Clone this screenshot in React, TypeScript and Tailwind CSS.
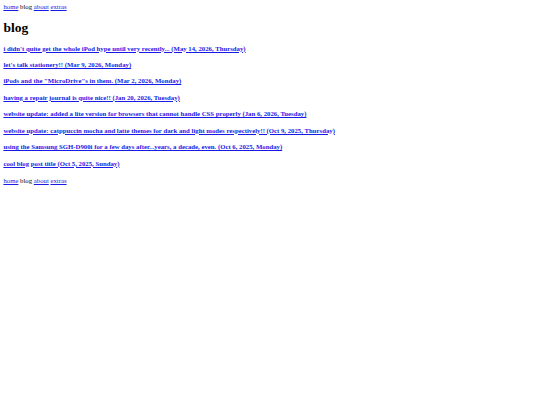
import React from 'react';

const posts = [
  "i didn't quite get the whole iPod hype until very recently... (May 14, 2026, Thursday)",
  "let's talk stationery!! (Mar 9, 2026, Monday)",
  'iPods and the "MicroDrive"s in them. (Mar 2, 2026, Monday)',
  'having a repair journal is quite nice!! (Jan 20, 2026, Tuesday)',
  'website update: added a lite version for browsers that cannot handle CSS properly (Jan 6, 2026, Tuesday)',
  'website update: catppuccin mocha and latte themes for dark and light modes respectively!! (Oct 9, 2025, Thursday)',
  'using the Samsung SGH-D900i for a few days after...years, a decade, even. (Oct 6, 2025, Monday)',
  'cool blog post title (Oct 5, 2025, Sunday)',
];

const Nav: React.FC = () => (
  <nav className="leading-[7.76px]">
    <a href="#" className="text-[#1a1ae6] underline">home</a> blog{' '}
    <a href="#" className="text-[#1a1ae6] underline">about</a>{' '}
    <a href="#" className="text-[#1a1ae6] underline">extras</a>
  </nav>
);

export default function App() {
  return (
    <div className="bg-white min-h-[405px] p-[3.4px] font-['Liberation_Serif',serif] text-[6.75px] text-black">
      <Nav />
      <h1 className="text-[13.5px] font-bold leading-[15.5px] mt-[9px] mb-[9px]">blog</h1>
      <div className="flex flex-col gap-[8.65px] mb-[9.9px]">
        {posts.map((p) => (
          <p key={p} className="font-bold leading-[7.76px]">
            <a href="#" className="text-[#1a1ae6] underline">{p}</a>
          </p>
        ))}
      </div>
      <Nav />
    </div>
  );
}
